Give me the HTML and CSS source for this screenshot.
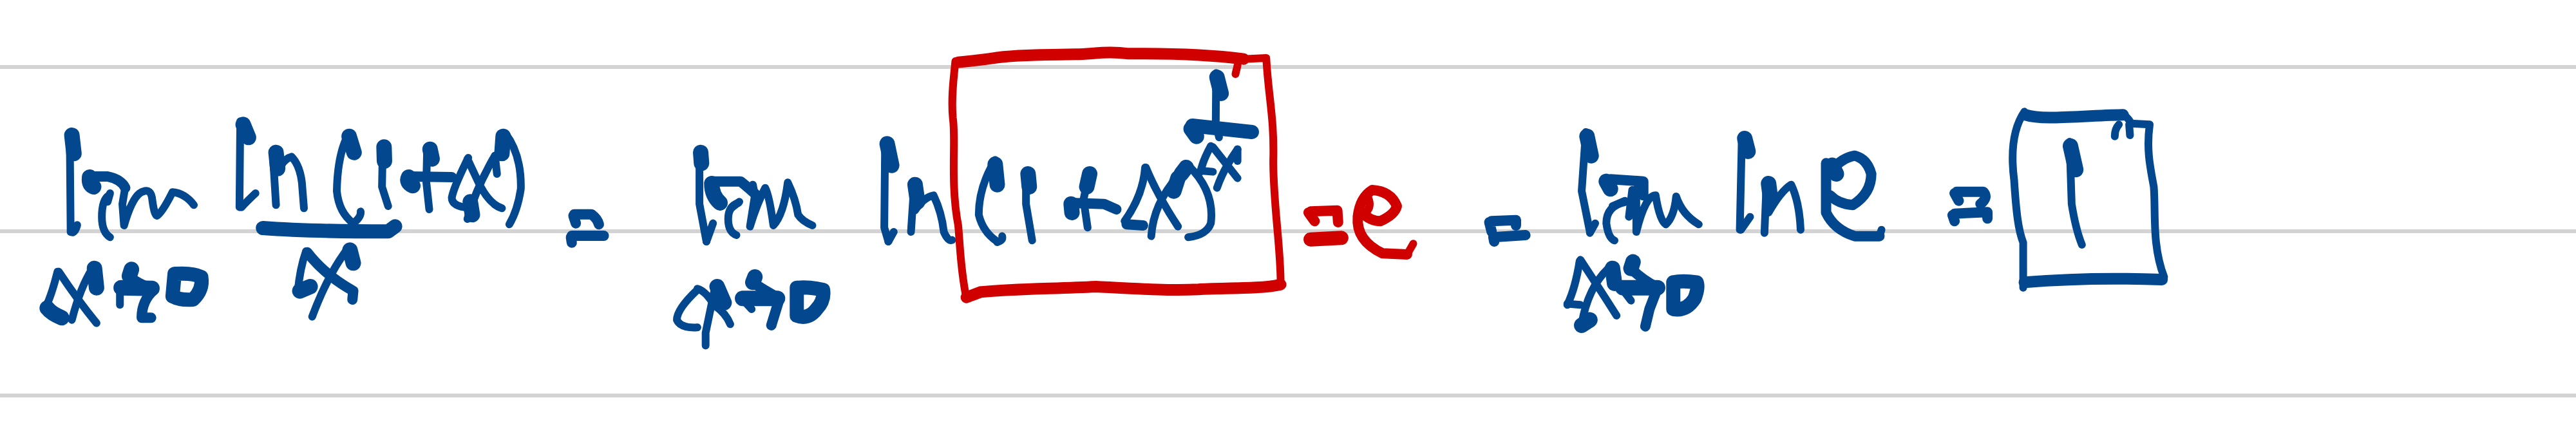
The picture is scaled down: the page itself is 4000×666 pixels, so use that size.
FILE: index.html
```html
<!DOCTYPE html>
<html lang="en">
<head>
<meta charset="utf-8">
<title>Limit of ln(1+x)/x as x approaches 0</title>
<link rel="stylesheet" href="styles.css">
</head>
<body>
<main class="sheet">
  <div class="rule"></div>
  <div class="rule"></div>
  <div class="rule"></div>
  <svg class="ink" viewBox="0 0 4000 666" role="img" aria-label="Handwritten: lim x to 0 of ln(1+x)/x = lim x to 0 of ln (1+x)^(1/x) = e = lim x to 0 of ln e = 1">
    <g class="z1 blue">
      <path class="t" d="M170 200L172 630"/><path class="b" d="M175 180L180 265"/><path class="f" d="M172 630Q182 640 188 598"/>
      <path class="m" d="M220 372L262 372Q295 385 305 425"/><path class="b" d="M218 375Q216 410 228 420"/>
      <path class="t" d="M305 420L298 500L302 600Q320 480 340 450Q365 420 370 470Q375 550 382 555Q395 540 420 445Q450 450 472 505"/>
      <path class="t" d="M265 460Q248 480 248 560Q248 630 268 655"/><path class="f" d="M268 450L262 490"/>
      <path class="t" d="M585 115L583 515"/><path class="b" d="M592 130L605 190"/><path class="f" d="M588 515Q600 490 622 450"/>
      <path class="t" d="M665 290L672 505"/><path class="b" d="M672 260L676 335"/><path class="t" d="M680 340Q690 290 710 280Q730 320 735 400L740 520"/>
      <path class="t" d="M850 170Q822 260 820 440Q825 540 860 590"/><path class="b" d="M850 185L862 260"/><path class="f" d="M860 590Q880 560 878 535"/>
      <path class="t" d="M932 230L930 420L945 510"/><path class="b" d="M935 235L936 300"/>
      <path class="m" d="M995 372L1100 375"/><path class="b" d="M995 375Q988 400 1005 415"/><path class="t" d="M1040 235L1038 400L1045 525"/><path class="b" d="M1047 245L1052 290"/>
      <path class="t" d="M1140 285Q1105 420 1100 470Q1100 505 1130 515M1138 290L1165 400Q1190 500 1222 520M1205 275Q1160 420 1138 570"/><path class="b" d="M1145 490L1150 550"/>
      <path class="t" d="M1230 170Q1270 270 1268 430Q1260 530 1240 595"/><path class="b" d="M1225 185L1222 265"/><path class="f" d="M1205 275L1210 360"/>
      <path class="h" d="M640 612Q750 628 945 628L962 604"/>
      <path class="t" d="M745 720Q730 800 725 910"/><path class="b" d="M730 905L755 885"/><path class="m" d="M748 725Q790 830 860 905L858 945"/><path class="t" d="M850 700Q800 820 760 1025"/><path class="b" d="M852 715L860 775"/>
      <path class="t" d="M140 815Q125 930 110 985"/><path class="b" d="M115 985Q125 1010 150 1030"/><path class="t" d="M143 815Q190 950 235 1055"/><path class="t" d="M225 800Q195 890 175 1040"/><path class="b" d="M230 800L235 890"/>
      <path class="b" d="M320 805L315 835"/><path class="m" d="M315 835Q325 860 375 900Q345 950 345 1030L368 1030"/><path class="b" d="M295 890L370 893"/><path class="f" d="M292 900L292 970"/>
      <path class="h" d="M425 825L420 930Q440 950 470 945Q495 900 490 840Q470 820 428 825"/>
      <path class="m" d="M1398 548L1440 548Q1455 570 1458 595M1396 555L1402 590"/><path class="m" d="M1392 648L1470 648M1390 655L1392 680"/>
    </g>
    <g class="z2 blue">
      <path class="t" d="M135 550L135 800L152 975"/><path class="b" d="M138 560L140 610"/><path class="f" d="M152 975L168 890"/>
      <path class="m" d="M170 695L235 695Q255 725 280 770"/><path class="b" d="M165 705Q165 760 185 795"/>
      <path class="t" d="M230 795Q205 810 205 870Q205 930 225 945"/><path class="f" d="M232 790L212 820"/>
      <path class="t" d="M265 710L270 760L258 905Q275 800 295 725Q305 760 315 900Q340 850 350 700Q370 780 375 850Q385 880 410 900"/>
      <path class="t" d="M587 505L585 910L595 975"/><path class="b" d="M592 520L603 620"/><path class="f" d="M595 975L608 930"/>
      <path class="t" d="M658 700L650 930"/><path class="b" d="M660 710L666 790"/><path class="t" d="M660 830Q680 770 705 760Q725 840 730 930Q740 975 750 968"/>
      <path class="t" d="M855 595Q815 720 815 850Q825 930 860 975"/><path class="b" d="M855 615L860 710"/><path class="f" d="M860 978Q875 970 872 950"/>
      <path class="t" d="M930 650L930 800L945 970"/><path class="b" d="M935 660L938 720"/>
      <path class="m" d="M1040 795L1120 800L1150 825"/><path class="b" d="M1040 800L1042 840"/><path class="t" d="M1085 645L1070 780L1080 910"/><path class="b" d="M1085 660L1078 720"/>
      <path class="t" d="M1220 630Q1215 760 1170 880"/><path class="m" d="M1175 895L1215 900"/><path class="t" d="M1222 630Q1250 760 1300 905M1300 670Q1240 800 1235 950"/><path class="b" d="M1300 680L1290 740"/>
      <path class="t" d="M1325 620Q1390 740 1380 890Q1370 945 1325 955"/><path class="b" d="M1320 630L1308 660"/>
      <path class="t" d="M1393 190L1392 420L1400 490"/><path class="b" d="M1395 210L1405 285"/>
      <path class="h" d="M1335 435L1480 465"/><path class="b" d="M1332 450L1345 485"/>
      <path class="t" d="M1380 530Q1360 600 1355 650"/><path class="f" d="M1355 645L1385 650"/><path class="t" d="M1385 535L1445 680M1445 545Q1410 640 1395 725"/><path class="f" d="M1445 545L1445 600"/>
      <path class="t" d="M130 1200Q80 1290 80 1340Q90 1380 130 1375M130 1195Q150 1205 170 1270Q200 1310 210 1360M175 1170L150 1400L150 1460"/><path class="b" d="M178 1185L195 1260"/>
      <path class="b" d="M270 1140L265 1165"/><path class="m" d="M265 1165Q290 1200 330 1240L310 1365"/><path class="b" d="M240 1240L325 1240"/><path class="f" d="M240 1245L262 1290"/>
      <path class="h" d="M372 1190L372 1320Q400 1340 420 1290Q440 1250 436 1200Q400 1185 375 1190"/>
      <g class="red">
        <path class="x" d="M765 140Q820 130 860 118C900 108 950 106 1050 103C1100 100 1130 88 1180 100C1300 98 1380 105 1460 125"/>
        <path class="r" d="M1460 125L1515 120C1520 300 1535 400 1532 600C1532 800 1550 1000 1550 1170"/>
        <path class="x" d="M1550 1175C1500 1198 1400 1190 1350 1198C1280 1205 1200 1195 1100 1185C1000 1195 900 1195 820 1210L785 1235"/>
        <path class="r" d="M785 1240C770 1100 770 1000 765 900C745 700 760 500 752 400C747 300 755 200 758 135"/>
        <path class="f" d="M1445 155L1440 195"/>
      </g>
    </g>
    <g class="z3 blue">
      <path class="t" d="M725 225L715 500L735 690"/><path class="b" d="M728 245L738 335"/><path class="f" d="M735 695L748 650"/>
      <path class="m" d="M785 445L865 455L865 520"/><path class="b" d="M775 455L785 490"/>
      <path class="t" d="M820 552Q775 570 775 650Q780 720 795 730"/><path class="f" d="M820 545L790 570"/>
      <path class="t" d="M838 495L830 620M848 490L848 690Q870 520 895 520Q905 640 920 655Q940 620 945 525Q960 610 1000 655"/>
      <path class="t" d="M1105 245L1100 680"/><path class="b" d="M1112 255L1120 315"/><path class="f" d="M1103 680L1125 620"/>
      <path class="t" d="M1165 460L1160 695"/><path class="b" d="M1170 465L1175 540"/><path class="t" d="M1170 600Q1200 500 1225 470Q1245 550 1248 680"/>
      <path class="m" d="M1320 520Q1340 560 1375 565Q1420 510 1420 420Q1410 350 1380 335Q1340 350 1320 420"/><path class="m" d="M1310 370L1310 600Q1330 680 1380 710L1440 710"/><path class="b" d="M1325 380L1335 420"/><path class="f" d="M1440 710L1445 680"/>
      <path class="m" d="M495 640L555 635L555 660M490 645L496 690"/><path class="m" d="M500 715L578 705M500 715L502 735"/>
      <path class="t" d="M710 825Q700 950 680 1030"/><path class="f" d="M680 1025L712 1030"/><path class="t" d="M712 820Q760 960 800 1080M780 860Q730 950 715 1120"/><path class="b" d="M790 860L795 930"/><path class="b" d="M715 1125L735 1100"/>
      <path class="b" d="M840 830L835 860"/><path class="m" d="M835 860Q860 910 900 950L880 1050L870 1130"/><path class="b" d="M815 950L900 950"/><path class="f" d="M815 960L835 1010"/>
      <path class="h" d="M938 925L938 1050Q970 1060 990 1000Q1000 950 995 925Q960 915 938 925"/>
      <g class="red">
        <path class="m" d="M55 595L120 590L122 645M50 600L65 640"/>
        <path class="h" d="M55 725L130 718"/>
        <path class="m" d="M180 600Q200 640 225 640Q260 610 265 570Q250 500 205 495Q175 530 170 620Q165 730 230 790L290 795"/>
        <path class="f" d="M290 795L305 745"/><path class="f" d="M195 530Q205 570 190 600"/>
      </g>
    </g>
    <g class="z4 blue">
      <path class="m" d="M60 503L125 503Q138 530 118 560M55 510L65 545"/><path class="m" d="M55 605L135 598L135 628M50 612L55 640"/>
      <path class="r" d="M225 130C200 200 190 300 200 450C205 600 210 680 222 740L222 950"/>
      <path class="x" d="M228 145C270 170 350 150 465 145"/>
      <path class="r" d="M465 140Q480 165 485 185L530 190C522 300 530 380 540 480C545 600 535 750 565 900"/>
      <path class="x" d="M560 912C450 905 350 905 225 925"/>
      <path class="f" d="M455 190Q445 210 445 245M480 190L482 240"/>
      <path class="t" d="M335 270L340 560Q350 680 365 750"/><path class="b" d="M337 290L350 400"/>
    </g>
  </svg>
</main>
</body>
</html>
```
FILE: styles.css
```css
html, body { margin: 0; background: #fff; }
.sheet {
  position: relative;
  width: 4000px;
  height: 666px;
  padding-top: 101px;
  box-sizing: border-box;
  display: flex;
  flex-direction: column;
  gap: 249px;
  overflow: hidden;
}
.rule { height: 6px; background: #d3d3d3; flex: none; }
.ink { position: absolute; inset: 0; width: 4000px; height: 666px; display: block; }
.ink path {
  fill: none;
  stroke-linecap: round;
  stroke-linejoin: round;
  vector-effect: non-scaling-stroke;
}
.blue path { stroke: #03478f; }
.red path { stroke: #d10000; }
.t { stroke-width: 12px; }
.f { stroke-width: 12px; }
.m { stroke-width: 16px; }
.h { stroke-width: 22px; }
.b { stroke-width: 24px; }
.r { stroke-width: 12px; }
.x { stroke-width: 18px; }
.z1 { transform: translate(0, 150px) scale(.6378, .3333); }
.z2 { transform: translate(1000px, 50px) scale(.6378, .3333); }
.z3 { transform: translate(2000px, 130px) scale(.6378, .3333); }
.z4 { transform: translate(3000px, 130px) scale(.6378, .3333); }
```
